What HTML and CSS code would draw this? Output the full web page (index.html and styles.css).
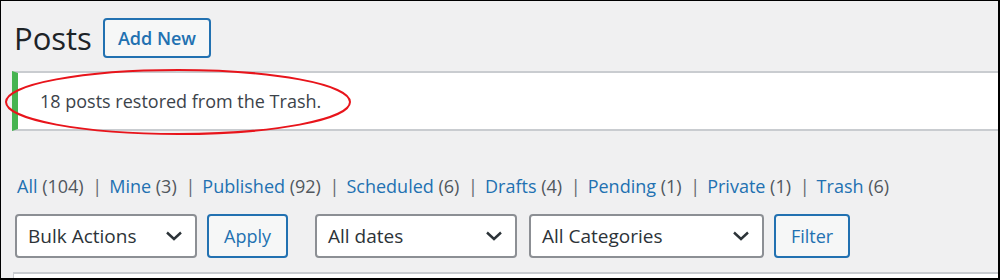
FILE: index.html
```html
<!DOCTYPE html>
<html lang="en">
<head>
    <meta charset="UTF-8">
    <title>Posts</title>
    <link rel="stylesheet" href="styles.css">
</head>
<body>
    <div class="frame">
        <div class="wrap">
            <div class="heading">
                <h1>Posts</h1>
                <a class="page-title-action" href="#">Add New</a>
            </div>

            <div class="notice notice-success">
                <p>18 posts restored from the Trash.</p>
            </div>

            <ul class="subsubsub">
                <li><a href="#">All <span class="count">(104)</span></a> |</li>
                <li><a href="#">Mine <span class="count">(3)</span></a> |</li>
                <li><a href="#">Published <span class="count">(92)</span></a> |</li>
                <li><a href="#">Scheduled <span class="count">(6)</span></a> |</li>
                <li><a href="#">Drafts <span class="count">(4)</span></a> |</li>
                <li><a href="#">Pending <span class="count">(1)</span></a> |</li>
                <li><a href="#">Private <span class="count">(1)</span></a> |</li>
                <li><a href="#">Trash <span class="count">(6)</span></a></li>
            </ul>

            <div class="tablenav">
                <div class="actions">
                    <div class="select bulk">
                        <span>Bulk Actions</span>
                        <svg class="chevron" width="18" height="10" viewBox="0 0 18 10"><path d="M2 1.5 L9 8 L16 1.5" fill="none" stroke="#2c3338" stroke-width="2.4"/></svg>
                    </div>
                    <button class="button">Apply</button>
                </div>
                <div class="actions">
                    <div class="select dates">
                        <span>All dates</span>
                        <svg class="chevron" width="18" height="10" viewBox="0 0 18 10"><path d="M2 1.5 L9 8 L16 1.5" fill="none" stroke="#2c3338" stroke-width="2.4"/></svg>
                    </div>
                    <div class="select cats">
                        <span>All Categories</span>
                        <svg class="chevron" width="18" height="10" viewBox="0 0 18 10"><path d="M2 1.5 L9 8 L16 1.5" fill="none" stroke="#2c3338" stroke-width="2.4"/></svg>
                    </div>
                    <button class="button">Filter</button>
                </div>
            </div>

            <div class="posts-table"></div>
        </div>

        <!-- red annotation round the notice -->
        <svg class="annotation" width="360" height="72" viewBox="0 0 360 72">
            <ellipse cx="177" cy="34" rx="172" ry="32" fill="none" stroke="#e8141b" stroke-width="2"/>
        </svg>
    </div>
</body>
</html>
```

FILE: styles.css
```css
html, body {
    margin: 0;
    padding: 0;
}
body {
    font-family: "Open Sans", "Noto Sans", sans-serif;
    background-color: #fff;
}
.frame {
    position: relative;
    box-sizing: border-box;
    width: 1000px;
    height: 280px;
    overflow: hidden;
    background-color: #f0f0f1;
    border-style: solid;
    border-color: #000;
    border-width: 1px 2px 2px 1px;
}
.wrap {
    padding-left: 11px;
}
.heading {
    display: flex;
    align-items: center;
    gap: 11px;
    height: 40px;
    padding-top: 17px;
}
h1 {
    margin: 0;
    font-size: 31px;
    font-weight: 400;
    color: #1d2327;
    line-height: 40px;
    padding-left: 2px;
}
.page-title-action {
    box-sizing: border-box;
    height: 40px;
    line-height: 36px;
    padding: 0 13px;
    border: 2px solid #2271b1;
    border-radius: 4px;
    background-color: #f6f7f7;
    color: #2271b1;
    font-size: 18px;
    font-weight: 600;
    text-decoration: none;
}
.notice {
    box-sizing: border-box;
    display: flex;
    align-items: center;
    height: 60px;
    margin-top: 13px;
    background-color: #fff;
    border-top: 2px solid #c9ccd0;
    border-bottom: 2px solid #c9ccd0;
    border-left: 6px solid #46b450;
}
.notice p {
    margin: 0;
    padding-left: 22px;
    font-size: 18px;
    color: #3c434a;
}
.subsubsub {
    display: flex;
    list-style: none;
    margin: 41px 0 0;
    padding: 0 0 0 5px;
    height: 28px;
    line-height: 28px;
    font-size: 18px;
    color: #646970;
    white-space: pre;
}
.subsubsub li {
    margin-right: 7px;
}
.subsubsub a {
    color: #2271b1;
    text-decoration: none;
    margin-right: 4px;
}
.subsubsub .count {
    color: #50575e;
}
.tablenav {
    display: flex;
    gap: 27px;
    margin-top: 14px;
    padding-left: 3px;
}
.actions {
    display: flex;
    gap: 10px;
}
.select {
    box-sizing: border-box;
    display: flex;
    align-items: center;
    justify-content: space-between;
    height: 44px;
    padding: 0 12px 0 11px;
    background-color: #fff;
    border: 2px solid #8c8f94;
    border-radius: 4px;
    font-size: 19px;
    color: #2c3338;
}
.bulk {
    width: 182px;
}
.dates {
    width: 202px;
}
.cats {
    width: 235px;
}
.actions .cats {
    margin-left: 2px;
}
.button {
    box-sizing: border-box;
    height: 44px;
    padding: 0 15px;
    background-color: #f6f7f7;
    border: 2px solid #2271b1;
    border-radius: 4px;
    color: #2271b1;
    font-family: inherit;
    font-size: 18px;
}
.posts-table {
    margin-top: 14px;
    height: 20px;
    background-color: #fff;
    border-top: 2px solid #c9ccd0;
    border-left: 1px solid #c9ccd0;
    margin-left: 1px;
}
.annotation {
    position: absolute;
    left: 0;
    top: 67px;
}
```
